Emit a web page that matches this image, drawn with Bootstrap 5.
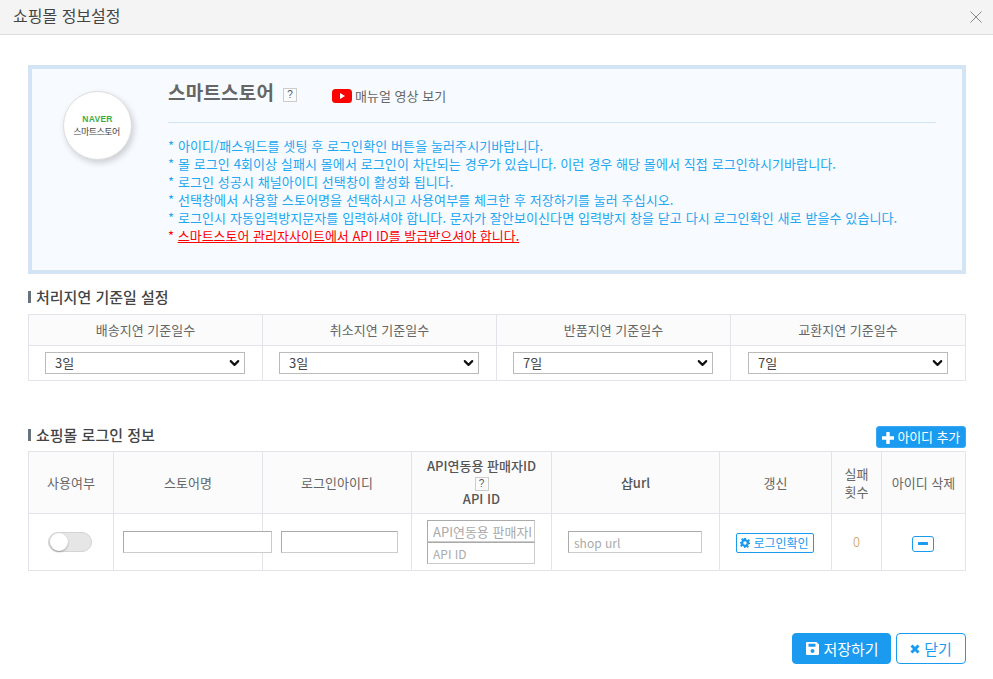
<!DOCTYPE html>
<html lang="ko">
<head>
<meta charset="utf-8">
<title>쇼핑몰 정보설정</title>
<link href="https://cdn.jsdelivr.net/npm/bootstrap@5.3.0/dist/css/bootstrap.min.css" rel="stylesheet">
<style>
html,body{height:100%}
body{font-family:"Noto Sans CJK KR","Noto Sans",sans-serif;font-size:13px;color:#555;background:#fff;overflow:hidden}
.pop-head{height:35px;background:#f4f4f4;border-bottom:1px solid #ddd;padding:0 11px 0 13px}
.pop-title{font-size:16px;line-height:30px;color:#444;margin:0;font-weight:400}
.pop-close{width:12px;height:12px;background:none;border:0;padding:0;display:block;margin-top:11px}
.pop-body{padding:30px 27px 0 28px}
.info-box{height:209px;border:4px solid #d3e5f5;background:#f7fbff;padding:0 26px 0 31px}
.logo-ball{width:69px;height:69px;border-radius:50%;background:#fff;border:1px solid #ddd;box-shadow:2px 3px 6px rgba(0,0,0,.18);margin-top:22px;flex:none;line-height:1}
.logo-naver{font-family:"Liberation Sans",sans-serif;font-weight:700;font-size:8.5px;color:#3cae47;letter-spacing:.3px;margin-bottom:3px}
.logo-store{font-size:9px;color:#444;letter-spacing:-.5px;margin-left:-2px}
.info-main{margin-left:36px}
.info-top{height:54px;border-bottom:1px solid #d3e5f5;padding-top:10px}
.store-name{font-size:19px;line-height:26px;font-weight:700;color:#666;margin:0;letter-spacing:.2px}
.q-mark{display:inline-block;width:14px;height:14px;border:1px solid #ccc;background:#fbfbfb;font-family:"Liberation Sans",sans-serif;font-size:10px;line-height:12px;text-align:center;color:#555;font-weight:400}
.q-head{margin-left:9px;margin-top:9px}
.yt-link{margin-left:35px;margin-top:10px;font-size:13px;line-height:14px;color:#666;text-decoration:none}
.yt-link svg{margin-right:3px}
.note-list{list-style:none;margin:14px 0 0;padding:0;font-size:13px;line-height:18px;color:#22a7f0;letter-spacing:.1px}
.note-red{color:#f00;letter-spacing:0}
.note-red span{text-decoration:underline}
.sec-title{font-size:15px;line-height:20px;color:#444;margin:0;font-weight:500;padding-left:8px;position:relative}
.sec-title::before{content:"";position:absolute;left:0;top:4px;width:3px;height:12px;background:#67727c}
.sec-one{margin-top:13px;margin-bottom:7px}
.grid-tbl{table-layout:fixed;width:100%;margin:0;border-color:#e3e3e9;font-size:13px;color:#555;--bs-table-color:#555}
.grid-tbl th{background:#fbfbfb;font-weight:400;text-align:center;vertical-align:middle;padding:0 2px;border-color:#e3e3e9;color:#666}
.grid-tbl td{text-align:center;vertical-align:middle;padding:0;border-color:#e3e3e9}
.head-one th{height:31px}
.row-one td{height:35px}
.day-select{width:200px;height:22px;margin:0 0 0 16px;padding:0 30px 0 9px;border:1px solid #bbb;border-radius:0;font-size:13px;line-height:20px;color:#444;background-image:url("data:image/svg+xml,%3csvg xmlns='http://www.w3.org/2000/svg' viewBox='0 0 16 16'%3e%3cpath fill='none' stroke='%23111' stroke-linecap='round' stroke-linejoin='round' stroke-width='3.4' d='m2 5 6 6 6-6'/%3e%3c/svg%3e");background-position:right 4px center;background-size:11px 10px}
.last-select{margin-left:17px}
.login-head{margin-top:45px;height:22px;margin-bottom:3px}
.login-head .sec-title{margin-top:-1px}
.add-btn{width:90px;height:22px;padding:0;background:#1a9bf0;border:1px solid #3aa9f2;border-radius:3px;color:#fff;font-size:13px;line-height:20px;letter-spacing:-.15px}
.add-btn:hover{background:#1a9bf0;color:#fff}
.head-two th{height:62px;line-height:16px}
.row-two td{height:57px}
.bold-th{font-weight:500!important;color:#555!important}
.tall-line{line-height:18px;display:block}
.plain-in{display:block;height:22px;border:1px solid #ccc;border-top-color:#aaa;border-left-color:#aaa;background:#fff;padding:0 5px;font-size:12px;color:#444;border-radius:0;outline:0}
.plain-in::placeholder{color:#aaa}
.store-in{width:149px;margin-left:9px;position:relative;z-index:1}
.login-in{width:117px;margin-left:18px}
.api-in{width:108px;margin-left:15px}
.api-long{font-size:13px;padding-right:1px}
.url-in{width:134px;margin-left:16px}
.switch-track{display:block;width:44px;height:20px;margin-left:19px;border-radius:10px;background:#e6e6e6;border:1px solid #d4d4d4;position:relative}
.switch-track::after{content:"";position:absolute;left:1px;top:0;width:18px;height:18px;border-radius:50%;background:#fff;box-shadow:0 1px 2px rgba(0,0,0,.3)}
.check-btn{width:78px;height:20px;padding:0;margin-right:2px;background:#fff;border:1px solid #1a9bf0;border-radius:2px;color:#1a9bf0;font-size:12px;line-height:18px;display:inline-flex;align-items:center;justify-content:center;gap:3px}
.minus-btn{width:22px;height:16px;padding:0;margin-right:2px;background:#fff;border:1px solid #1a9bf0;border-radius:3px;display:inline-flex;align-items:center;justify-content:center;vertical-align:middle}
.fail-num{color:#c8964b;font-size:13px;font-weight:300}
.foot-bar{margin-top:62px;gap:5px}
.save-btn,.close-btn{height:31px;padding:0;font-size:15px;line-height:29px;border-radius:4px;display:inline-flex;align-items:center;justify-content:center;gap:4px;border:1px solid #1a9bf0}
.save-btn{width:99px;padding-left:2px;background:#1a9bf0;color:#fff}
.close-btn{width:70px;background:#fff;color:#1a9bf0}
.save-btn:hover{background:#1a9bf0;color:#fff}
.close-btn:hover{background:#fff;color:#1a9bf0}
</style>
</head>
<body>
<header class="pop-head d-flex align-items-start justify-content-between">
  <h1 class="pop-title">쇼핑몰 정보설정</h1>
  <button type="button" class="pop-close" aria-label="닫기"><svg width="12" height="12" viewBox="0 0 12 12" class="d-block"><path d="M.5.5l11 11M11.5.5l-11 11" stroke="#888" stroke-width="1" fill="none"/></svg></button>
</header>
<main class="pop-body">
  <section class="info-box d-flex">
    <div class="logo-ball d-flex flex-column align-items-center justify-content-center">
      <div class="logo-naver">NAVER</div>
      <div class="logo-store">스마트스토어</div>
    </div>
    <div class="info-main flex-grow-1">
      <div class="info-top d-flex align-items-start">
        <h2 class="store-name">스마트스토어</h2>
        <span class="q-mark q-head">?</span>
        <a class="yt-link d-flex align-items-center" href="#"><svg width="20" height="14" viewBox="0 0 20 14"><rect width="20" height="14" rx="3.5" fill="#f00"/><path d="M8 4l5 3-5 3z" fill="#fff"/></svg>매뉴얼 영상 보기</a>
      </div>
      <ul class="note-list">
        <li>* 아이디/패스워드를 셋팅 후 로그인확인 버튼을 눌러주시기바랍니다.</li>
        <li>* 몰 로그인 4회이상 실패시 몰에서 로그인이 차단되는 경우가 있습니다. 이런 경우 해당 몰에서 직접 로그인하시기바랍니다.</li>
        <li>* 로그인 성공시 채널아이디 선택창이 활성화 됩니다.</li>
        <li>* 선택창에서 사용할 스토어명을 선택하시고 사용여부를 체크한 후 저장하기를 눌러 주십시오.</li>
        <li>* 로그인시 자동입력방지문자를 입력하셔야 합니다. 문자가 잘안보이신다면 입력방지 창을 닫고 다시 로그인확인 새로 받을수 있습니다.</li>
        <li class="note-red">* <span>스마트스토어 관리자사이트에서 API ID를 발급받으셔야 합니다.</span></li>
      </ul>
    </div>
  </section>

  <h3 class="sec-title sec-one">처리지연 기준일 설정</h3>
  <table class="table table-bordered grid-tbl">
    <colgroup><col style="width:234px"><col style="width:234px"><col style="width:234px"><col></colgroup>
    <thead><tr class="head-one"><th>배송지연 기준일수</th><th>취소지연 기준일수</th><th>반품지연 기준일수</th><th>교환지연 기준일수</th></tr></thead>
    <tbody><tr class="row-one">
      <td><select class="form-select day-select"><option>3일</option></select></td>
      <td><select class="form-select day-select"><option>3일</option></select></td>
      <td><select class="form-select day-select"><option>7일</option></select></td>
      <td><select class="form-select day-select last-select"><option>7일</option></select></td>
    </tr></tbody>
  </table>

  <div class="login-head d-flex align-items-start justify-content-between">
    <h3 class="sec-title">쇼핑몰 로그인 정보</h3>
    <button type="button" class="btn add-btn"><svg width="12" height="12" viewBox="0 0 12 12"><path d="M4.300 0h3.400v4.300H12v3.400H7.700V12H4.300V7.700H0V4.300h4.300z" fill="#fff"/></svg> 아이디 추가</button>
  </div>
  <table class="table table-bordered grid-tbl">
    <colgroup><col style="width:85px"><col style="width:149px"><col style="width:149px"><col style="width:140px"><col style="width:168px"><col style="width:112px"><col style="width:50px"><col></colgroup>
    <thead><tr class="head-two">
      <th>사용여부</th><th>스토어명</th><th>로그인아이디</th>
      <th class="bold-th">API연동용 판매자ID<br><span class="q-mark">?</span><br>API ID</th>
      <th class="bold-th">샵url</th><th>갱신</th><th><span class="tall-line">실패<br>횟수</span></th><th>아이디 삭제</th>
    </tr></thead>
    <tbody><tr class="row-two">
      <td><span class="switch-track"></span></td>
      <td><input class="plain-in store-in" type="text" aria-label="스토어명"></td>
      <td><input class="plain-in login-in" type="text" aria-label="로그인아이디"></td>
      <td><input class="plain-in api-in api-long" type="text" placeholder="API연동용 판매자ID"><input class="plain-in api-in" type="text" placeholder="API ID"></td>
      <td><input class="plain-in url-in" type="text" placeholder="shop url"></td>
      <td><button type="button" class="btn check-btn"><svg width="10" height="10" viewBox="0 0 10 10"><path fill="#1a9bf0" fill-rule="evenodd" d="M4 0h2l.3 1.400 1.200.5L8.700 1.100l1.200 1.200-.8 1.200.5 1.200L10 5v1l-1.400.3-.5 1.200.8 1.200-1.200 1.200-1.200-.8-1.200.5L4.800 10H4l-.3-1.400-1.200-.5-1.200.8L.1 7.700l.8-1.200-.5-1.200L0 5V4l1.400-.3.500-1.200L1.100 1.300 2.300.1l1.200.8.500-.5zM5 3.300a1.700 1.700 0 1 0 0 3.400 1.700 1.700 0 0 0 0-3.400z"/></svg>로그인확인</button></td>
      <td class="fail-num">0</td>
      <td><button type="button" class="btn minus-btn" aria-label="아이디 삭제"><svg width="10" height="3" viewBox="0 0 10 3" class="d-block"><rect width="10" height="3" rx=".5" fill="#1a9bf0"/></svg></button></td>
    </tr></tbody>
  </table>

  <div class="foot-bar d-flex justify-content-end">
    <button type="button" class="btn save-btn"><svg width="13" height="13" viewBox="0 0 13 13"><path fill="#fff" fill-rule="evenodd" d="M1 0h9.500L13 2.500V12a1 1 0 0 1-1 1H1a1 1 0 0 1-1-1V1a1 1 0 0 1 1-1zm1.500 1.700v3h7v-3zM6.500 7a2 2 0 1 0 0 4 2 2 0 0 0 0-4z"/></svg>저장하기</button>
    <button type="button" class="btn close-btn"><svg width="10" height="10" viewBox="0 0 10 10"><path d="M1.500 1.500l7 7M8.500 1.500l-7 7" stroke="#1a9bf0" stroke-width="3" fill="none"/></svg>닫기</button>
  </div>
</main>
<script src="https://cdn.jsdelivr.net/npm/bootstrap@5.3.0/dist/js/bootstrap.bundle.min.js"></script>
</body>
</html>
